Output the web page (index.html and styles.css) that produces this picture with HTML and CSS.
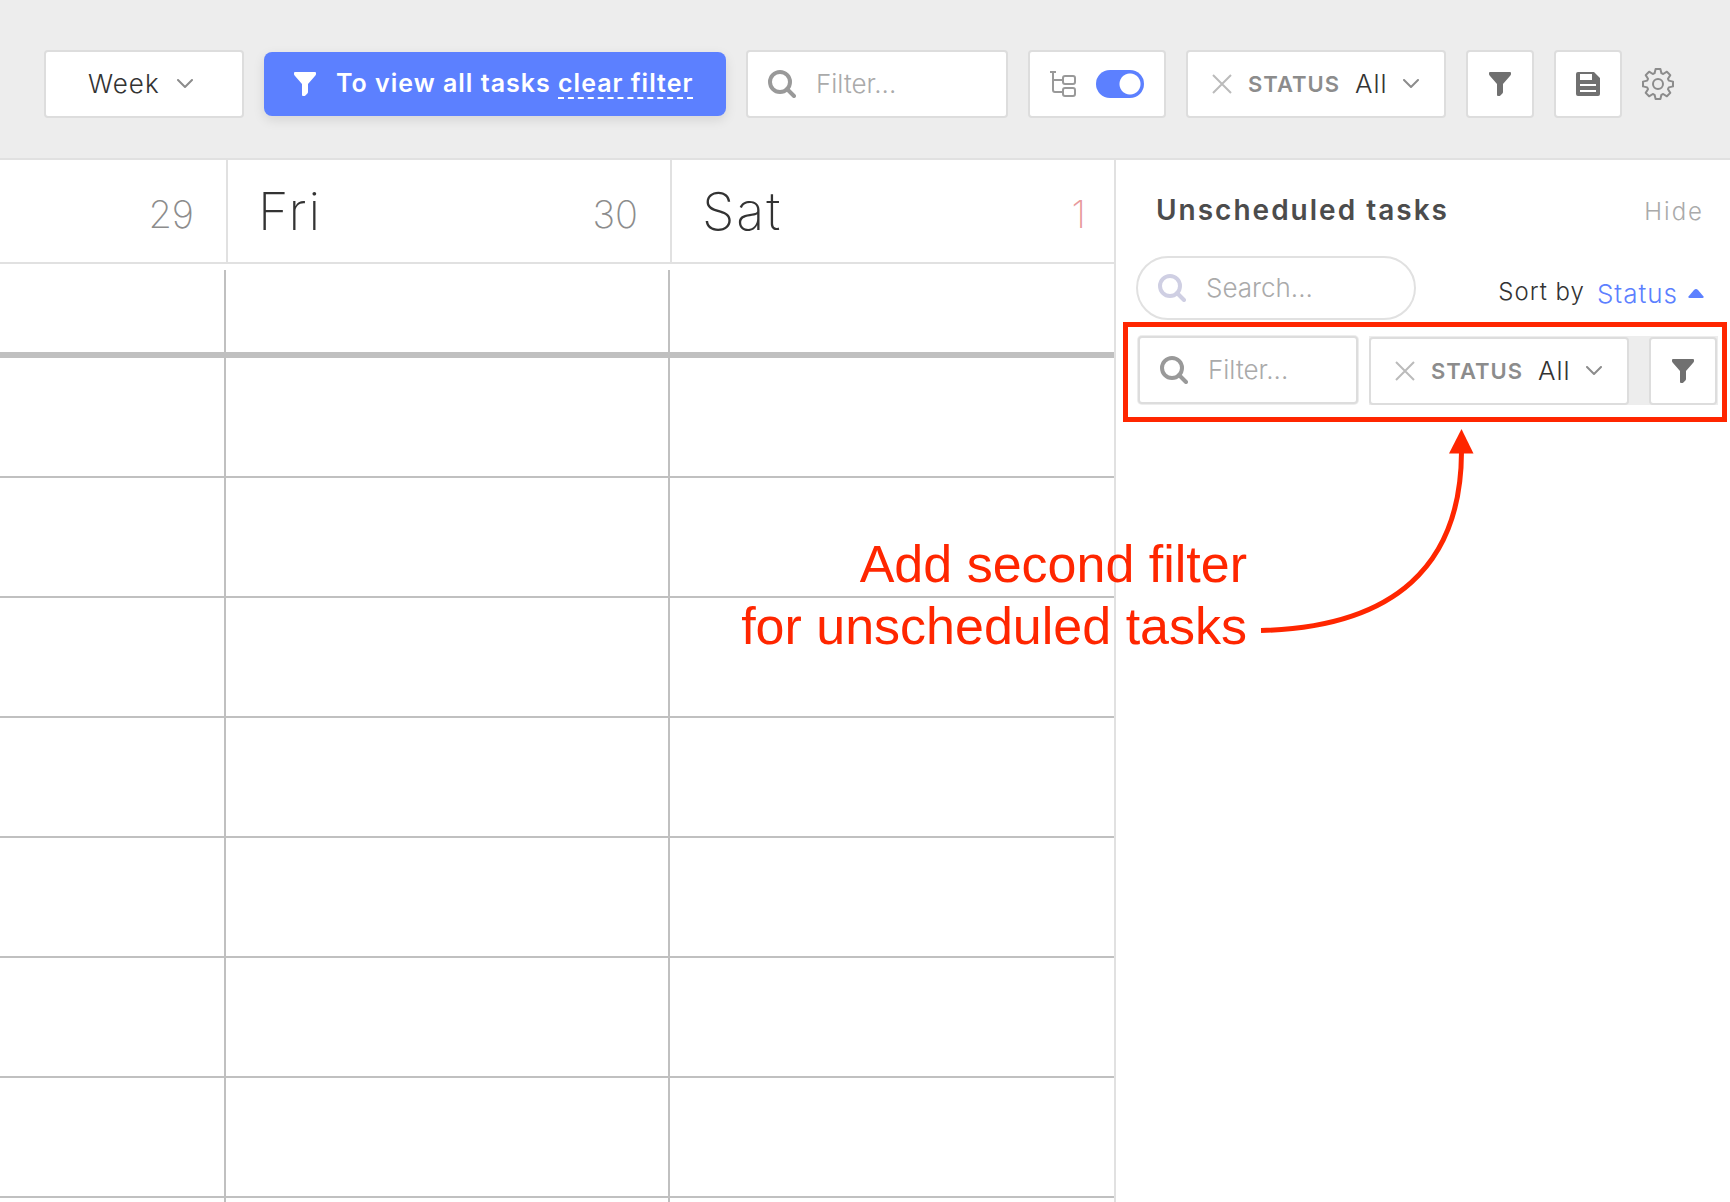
FILE: index.html
```
<!DOCTYPE html>
<html lang="en">
<head>
<meta charset="utf-8">
<meta name="viewport" content="width=device-width, initial-scale=1">
<title>Week calendar</title>
<link rel="stylesheet" href="styles.css">
</head>
<body>
<svg class="sprite" aria-hidden="true">
  <symbol id="i-search" viewBox="0 0 28 28"><circle cx="12" cy="12" r="10" fill="none" stroke="currentColor" stroke-width="4"/><path d="M19 19l7 7" stroke="currentColor" stroke-width="4" stroke-linecap="round"/></symbol>
  <symbol id="i-funnel" viewBox="0 0 22 24"><path d="M1 0h20q1 0 1 1v1q0 .8-.6 1.500L14 12v8q0 .8-.6 1.400l-2 2q-.8.600-1.400.600H9q-1 0-1-1V12L.6 3.500Q0 2.800 0 2V1q0-1 1-1z" fill="currentColor"/></symbol>
  <symbol id="i-chevron" viewBox="0 0 16 10"><path d="M1 1l7 7 7-7" fill="none" stroke="currentColor" stroke-width="2" stroke-linecap="round" stroke-linejoin="round"/></symbol>
  <symbol id="i-close" viewBox="0 0 20 20"><path d="M1 1l18 18M19 1L1 19" fill="none" stroke="currentColor" stroke-width="2"/></symbol>
</svg>

<header class="toolbar">
  <label class="box period">
    <select class="select" aria-label="Period"><option>Week</option><option>Month</option></select>
    <svg class="chevron"><use href="#i-chevron"/></svg>
  </label>
  <div class="notice">
    <svg class="funnel"><use href="#i-funnel"/></svg>
    <p class="notice-text">To view all tasks <a class="notice-link" href="#clear">clear filter</a></p>
  </div>
  <label class="box field field-main">
    <svg class="search-icon"><use href="#i-search"/></svg>
    <input class="input" type="text" placeholder="Filter..." aria-label="Filter tasks">
  </label>
  <label class="box subtasks">
    <svg class="tree" viewBox="0 0 26 26" fill="none" stroke="currentColor" stroke-width="2"><path d="M0 1h6M3 1v18q0 2 2 2h7M3 9h9"/><rect x="13" y="5" width="12" height="8" rx="2"/><rect x="13" y="17" width="12" height="8" rx="2"/></svg>
    <input class="toggle" type="checkbox" checked aria-label="Show subtasks">
  </label>
  <div class="box status">
    <button class="plain close" type="button" aria-label="Remove status filter"><svg class="close-icon"><use href="#i-close"/></svg></button>
    <label class="status-name" for="status-main">STATUS</label>
    <span class="status-value">
      <select class="select" id="status-main"><option>All</option><option>Open</option></select>
      <svg class="chevron"><use href="#i-chevron"/></svg>
    </span>
  </div>
  <button class="box square" type="button" aria-label="Filters"><svg class="funnel"><use href="#i-funnel"/></svg></button>
  <button class="box square" type="button" aria-label="Save view">
    <svg class="save" viewBox="0 0 24 24"><path fill="currentColor" fill-rule="evenodd" d="M2 0h16l6 6v16q0 2-2 2H2q-2 0-2-2V2q0-2 2-2zM4 2v6h12V2zM4 12v2h16v-2zM4 18v2h16v-2z"/></svg>
  </button>
  <button class="plain" type="button" aria-label="Settings">
    <svg class="gear" viewBox="-16 -16 32 32" fill="none" stroke="currentColor" stroke-width="2" stroke-linejoin="round"><circle r="5"/><path d="M-3.400-10.800L-2.400-15H2.400L3.400-10.800 5.200-10 8.900-12.300 12.300-8.900 10-5.200 10.800-3.400 15-2.400V2.400L10.800 3.400 10 5.200 12.300 8.900 8.900 12.300 5.200 10 3.400 10.800 2.400 15H-2.400L-3.400 10.800-5.200 10-8.900 12.300-12.300 8.900-10 5.200-10.800 3.400-15 2.400V-2.400L-10.800-3.400-10-5.200-12.300-8.900-8.900-12.300-5.200-10z"/></svg>
  </button>
</header>

<main class="layout">
  <section class="calendar" aria-label="Calendar">
    <div class="days">
      <div class="day"><span class="date">29</span></div>
      <div class="day"><h2 class="day-name">Fri</h2><span class="date">30</span></div>
      <div class="day"><h2 class="day-name">Sat</h2><span class="date weekend">1</span></div>
    </div>
    <div class="slots">
      <div class="row all-day"><i></i><i></i><i></i></div>
      <div class="row"><i></i><i></i><i></i></div>
      <div class="row"><i></i><i></i><i></i></div>
      <div class="row"><i></i><i></i><i></i></div>
      <div class="row"><i></i><i></i><i></i></div>
      <div class="row"><i></i><i></i><i></i></div>
      <div class="row"><i></i><i></i><i></i></div>
      <div class="row"><i></i><i></i><i></i></div>
      <div class="row"><i></i><i></i><i></i></div>
    </div>
  </section>

  <aside class="panel">
    <div class="panel-head">
      <h1 class="panel-title">Unscheduled tasks</h1>
      <button class="plain hide" type="button">Hide</button>
    </div>
    <div class="panel-tools">
      <label class="field search">
        <svg class="search-icon"><use href="#i-search"/></svg>
        <input class="input" type="search" placeholder="Search..." aria-label="Search unscheduled tasks">
      </label>
      <div class="sort">
        <span class="sort-label">Sort by</span>
        <button class="plain sort-value" type="button">Status<svg class="caret" viewBox="0 0 16 10"><path d="M8 0q1 0 2 1l5.500 6.500Q16 9 14.500 9h-13Q0 9 .5 7.500L6 1q1-1 2-1z" fill="currentColor"/></svg></button>
      </div>
    </div>
    <div class="highlight">
      <label class="box field field-side">
        <svg class="search-icon"><use href="#i-search"/></svg>
        <input class="input" type="text" placeholder="Filter..." aria-label="Filter unscheduled tasks">
      </label>
      <div class="side-filters">
        <div class="box status">
          <button class="plain close" type="button" aria-label="Remove status filter"><svg class="close-icon"><use href="#i-close"/></svg></button>
          <label class="status-name" for="status-side">STATUS</label>
          <span class="status-value">
            <select class="select" id="status-side"><option>All</option><option>Open</option></select>
            <svg class="chevron"><use href="#i-chevron"/></svg>
          </span>
        </div>
        <button class="box square" type="button" aria-label="Filters"><svg class="funnel"><use href="#i-funnel"/></svg></button>
      </div>
    </div>
    <p class="callout">Add second filter<br>for unscheduled tasks</p>
    <svg class="arrow" viewBox="0 0 240 230" fill="none" stroke="currentColor" stroke-width="5"><path d="M11 210.500C145 207 211 145 211.500 32"/><path d="M211.500 9L223.500 33.500H199z" fill="currentColor" stroke="none"/></svg>
  </aside>
</main>
</body>
</html>
```
FILE: styles.css
```
* { box-sizing: border-box; }

body {
  margin: 0;
  height: 100vh;
  overflow: hidden;
  display: flex;
  flex-direction: column;
  background: #fff;
  color: #333;
  font-family: Inter, "Liberation Sans", sans-serif;
  font-size: 26px;
  font-weight: 300;
  line-height: 32px;
}

h1, h2, p { margin: 0; font-weight: inherit; }
svg { display: block; flex: none; }
.sprite { position: absolute; width: 0; height: 0; }

button, input, select { font: inherit; color: inherit; margin: 0; }
.plain { border: 0; padding: 0; background: none; }

/* Toolbar */
.toolbar {
  display: flex;
  align-items: center;
  gap: 20px;
  padding: 50px 56px 40px 44px;
  background: #ededed;
  border-bottom: 2px solid #e1e1e1;
}

.box {
  display: flex;
  align-items: center;
  flex: none;
  height: 68px;
  padding: 0;
  background: #fff;
  border: 2px solid #ddd;
  border-radius: 4px;
}

.select {
  appearance: none;
  grid-area: 1 / 1;
  width: 100%;
  height: 64px;
  padding: 0;
  border: 0;
  background: none;
  outline: 0;
  letter-spacing: 1px;
}

.chevron { width: 16px; height: 10px; color: #8c8c8c; grid-area: 1 / 1; justify-self: end; pointer-events: none; }

.period { display: grid; width: 200px; padding-right: 49px; }
.period .select { padding-left: 42px; }

.notice {
  display: flex;
  align-items: center;
  gap: 20px;
  flex: none;
  width: 462px;
  height: 64px;
  padding: 0 30px;
  color: #fff;
  background: #5c80ff;
  border-radius: 8px;
  box-shadow: 0 4px 12px rgba(0, 0, 0, .1);
  font-weight: 600;
}
.notice-text { white-space: nowrap; font-size: 25px; line-height: 28px; letter-spacing: 1px; }
.notice-link { display: inline-block; color: inherit; text-decoration: none; border-bottom: 2px dashed #fff; }
.funnel { width: 22px; height: 24px; }

.field { display: flex; align-items: center; gap: 20px; padding: 0 20px; }
.field-main { flex: 1 1 0; min-width: 0; }
.search-icon { width: 28px; height: 28px; color: #999; }
.input { flex: 1; min-width: 0; width: 0; padding: 0; border: 0; outline: 0; background: none; appearance: none; }
.input::placeholder { color: #aaa; opacity: 1; }

.subtasks { width: 138px; padding: 0 20px; justify-content: space-between; }
.tree { width: 26px; height: 26px; color: #999; }
.toggle {
  appearance: none;
  width: 48px;
  height: 28px;
  margin: 0;
  border-radius: 14px;
  background: radial-gradient(circle at 34px 14px, #fff 10px, #5c80ff 11px);
}

.status { width: 260px; padding: 0 25px 0 24px; }
.close { margin-right: 16px; }
.close-icon { width: 20px; height: 20px; color: #bbb; }
.status-name { font-size: 22px; font-weight: 600; color: #8c8c8c; letter-spacing: 1px; }
.status-value { display: grid; align-items: center; width: 64px; margin-left: auto; }

.square { width: 68px; justify-content: center; color: #707070; }
.save { width: 24px; height: 24px; }
.gear { width: 32px; height: 32px; color: #8c8c8c; }

/* Calendar */
.layout { flex: 1; min-height: 0; display: flex; }
.calendar { flex: 1; min-width: 0; overflow: hidden; }

.days {
  display: grid;
  grid-template-columns: 228fr 444fr 442fr;
  height: 104px;
  border-bottom: 2px solid #e1e1e1;
}
.day {
  display: flex;
  align-items: flex-start;
  padding: 22px 32px 0 30px;
  border-right: 2px solid #e1e1e1;
}
.day:last-child { border-right: 0; padding-right: 28px; }
.day-name { font-size: 52px; line-height: 60px; font-weight: 200; letter-spacing: 2px; }
.date { margin-left: auto; font-size: 38px; line-height: 64px; font-weight: 200; color: #8c8c8c; }
.weekend { color: #e89a9c; }

.slots { padding-top: 6px; }
.row {
  display: grid;
  grid-template-columns: 226fr 444fr 444fr;
  height: 120px;
  border-bottom: 2px solid #c0c0c0;
}
.all-day { height: 88px; border-bottom-width: 6px; }
.row i { border-right: 2px solid #c0c0c0; }
.row i:last-child { border-right: 0; }

/* Unscheduled tasks */
.panel {
  position: relative;
  flex: none;
  width: 616px;
  border-left: 2px solid #e1e1e1;
}
.panel-head {
  display: flex;
  align-items: baseline;
  justify-content: space-between;
  padding: 34px 26px 28px 40px;
}
.panel-title { font-size: 28px; font-weight: 600; color: #4c4c4c; letter-spacing: 2px; }
.hide { font-size: 24px; color: #aaa; letter-spacing: 2px; }

.panel-tools { display: flex; align-items: center; justify-content: space-between; padding: 0 26px 0 20px; }
.search { width: 280px; height: 64px; border: 2px solid #e1e1e1; border-radius: 32px; }
.search .search-icon { color: #cfcfe3; }
.sort { display: flex; align-items: flex-start; gap: 12px; padding-top: 12px; letter-spacing: 1px; }
.sort-label { font-size: 24px; line-height: 28px; }
.sort-value { display: flex; align-items: center; gap: 10px; color: #5c80ff; letter-spacing: 1px; }
.caret { width: 16px; height: 10px; }

.highlight {
  display: flex;
  align-items: flex-start;
  gap: 11px;
  margin: 2px 3px 0 7px;
  padding: 9px 4px 12px 10px;
  border: 5px solid #ff2600;
}
.field-side { flex: 1; box-shadow: 0 0 0 1px #ededed; }
.side-filters { display: flex; gap: 20px; padding: 1px 1px 0 0; background: #ededed; }

.callout {
  position: absolute;
  top: 373px;
  right: 483px;
  color: #ff2600;
  font-family: "Liberation Sans", sans-serif;
  font-size: 52px;
  font-weight: 400;
  line-height: 62px;
  text-align: right;
  white-space: nowrap;
}
.arrow { position: absolute; top: 260px; left: 134px; width: 240px; height: 230px; color: #ff2600; pointer-events: none; }
```
